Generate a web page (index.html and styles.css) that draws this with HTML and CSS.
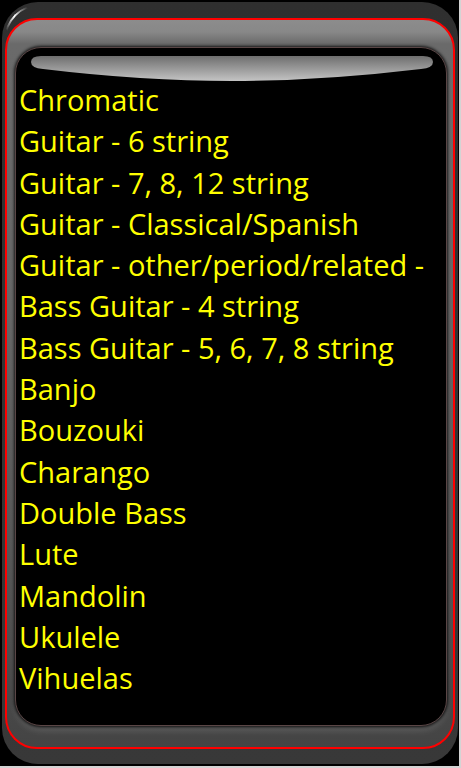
FILE: index.html
```html
<!DOCTYPE html>
<html lang="en">
<head>
    <meta charset="UTF-8">
    <meta name="viewport" content="width=device-width, initial-scale=1.0">
    <title>Instruments</title>
    <link rel="stylesheet" href="styles.css">
</head>
<body>
    <div class="frame">
        <div class="shine"></div>
        <div class="bezel">
            <div class="screen">
                <!-- glossy reflection along the top of the screen -->
                <svg class="gloss" width="402" height="26" viewBox="0 0 402 26">
                    <defs>
                        <linearGradient id="glossFill" x1="0" y1="0" x2="0" y2="1">
                            <stop offset="0" stop-color="#6e6e6e"/>
                            <stop offset="1" stop-color="#c4c4c4"/>
                        </linearGradient>
                    </defs>
                    <path d="M10,0 H392 Q402,0 402,6 Q402,12 390,13 Q290,25 201,25 Q112,25 12,13 Q0,12 0,6 Q0,0 10,0 Z" fill="url(#glossFill)"/>
                </svg>
                <ul class="list">
                    <li>Chromatic</li>
                    <li>Guitar - 6 string</li>
                    <li>Guitar - 7, 8, 12 string</li>
                    <li>Guitar - Classical/Spanish</li>
                    <li>Guitar - other/period/related -</li>
                    <li>Bass Guitar - 4 string</li>
                    <li>Bass Guitar - 5, 6, 7, 8 string</li>
                    <li>Banjo</li>
                    <li>Bouzouki</li>
                    <li>Charango</li>
                    <li>Double Bass</li>
                    <li>Lute</li>
                    <li>Mandolin</li>
                    <li>Ukulele</li>
                    <li>Vihuelas</li>
                </ul>
            </div>
        </div>
    </div>
</body>
</html>
```

FILE: styles.css
```css
html {
    background-color: #d4d4d4;
}
body {
    margin: 0;
    width: 459px;
    height: 766px;
    background-color: #000;
    font-family: "Open Sans", "Noto Sans", sans-serif;
    overflow: hidden;
}
.frame {
    position: relative;
    box-sizing: border-box;
    margin: 2px 0 0 2px;
    width: 456px;
    height: 762px;
    padding: 16px 3px 15px 3px;
    border-radius: 36px;
    background: linear-gradient(to bottom, #2f2f2f 0, #333 50%, #383838 100%);
}
.shine {
    position: absolute;
    left: 2px;
    top: 2px;
    width: 40px;
    height: 44px;
    border-top: 2px solid #fff;
    border-left: 2px solid #fff;
    border-top-left-radius: 36px;
    -webkit-mask-image: linear-gradient(45deg, transparent 25%, #000 50%, transparent 75%);
    mask-image: linear-gradient(45deg, transparent 25%, #000 50%, transparent 75%);
}
.bezel {
    box-sizing: border-box;
    height: 100%;
    padding: 27px 6px 21px 8px;
    border: 2px solid #f00;
    border-radius: 32px;
    background: linear-gradient(to bottom, #8c8c8c 0, #888 12px, #6a6a6a 24px, #666 40%, #555 75%, #444 100%);
}
.screen {
    box-sizing: border-box;
    height: 100%;
    padding: 8px 15px 0 15px;
    border: 1px solid #5a4646;
    border-radius: 26px;
    background-color: #000;
    box-shadow: 0 0 3px 1px rgba(0, 0, 0, 0.85), 0 5px 6px rgba(255, 255, 255, 0.12);
}
.gloss {
    display: block;
}
.list {
    list-style: none;
    margin: -3px 0 0 -12px;
    padding: 0;
    color: #ff0;
    font-size: 29px;
    line-height: 41.3px;
    white-space: nowrap;
}
```
